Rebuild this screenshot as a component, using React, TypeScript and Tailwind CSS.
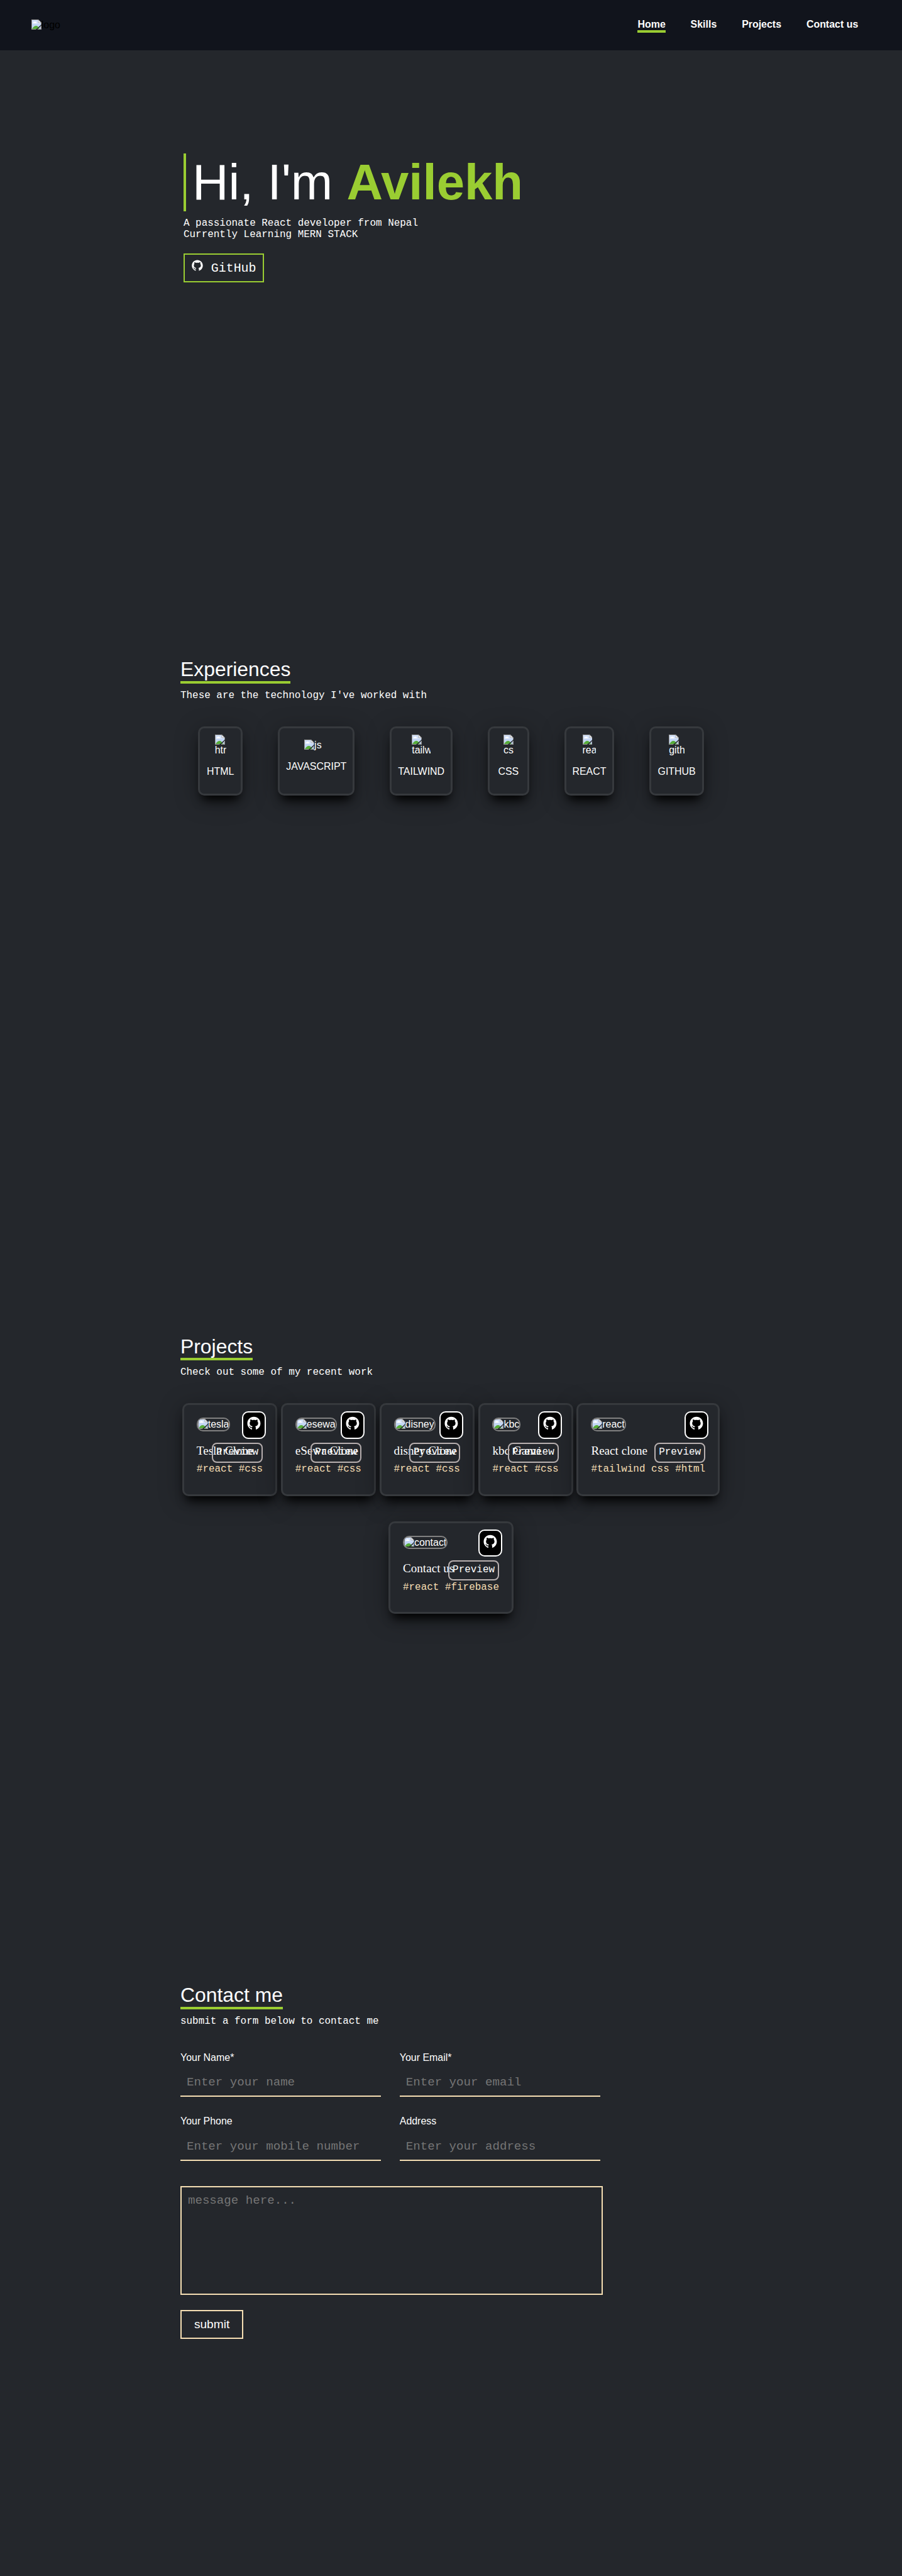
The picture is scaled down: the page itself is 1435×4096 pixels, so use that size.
import React from "react";
import { AiFillGithub } from "react-icons/ai";

const SANS = "font-['Liberation_Sans',sans-serif]";
const MONO = "font-['Liberation_Mono',monospace]";

function BrokenImage() {
  return (
    <svg width="16" height="16" viewBox="0 0 16 16" className="block shrink-0">
      <path d="M0 0H11L16 5V16H0Z" fill="#9a9a9a" />
      <path d="M1 1H11V5H15V15H1Z" fill="#c3d6f5" />
      <path d="M1 1H11V5H15V7H1Z" fill="#d3e1fa" />
      <path d="M11 0.6L15.4 5H11Z" fill="#fff" stroke="#9a9a9a" strokeWidth="0.8" />
      <path d="M2.6 6C2.2 4.6 3.4 4 4.2 4.2C4.6 2.8 6.6 2.8 7 4.2C8.2 4 8.8 5 8.3 6Z" fill="#fff" />
      <path d="M1 15C3 11.5 5 10 7.5 10C9.5 10 11.5 11.5 12.5 15Z" fill="#56ac38" />
      <path d="M16 7.8V9.8L9.6 16H6.9Z" fill="#24272c" />
      <path d="M15 10.8V15H10.8Z" fill="#c3d6f5" />
      <path d="M10 15L12 13.2L13 15Z" fill="#56ac38" />
      <path d="M15 10V16M10 15.5H16" stroke="#9a9a9a" strokeWidth="1" fill="none" />
    </svg>
  );
}

function Heading({ title, text }: { title: string; text: string }) {
  return (
    <div className="flex h-[69px] flex-col items-start">
      <h2 className="h-[41px] border-b-[4.02px] border-[#9acd32] text-[32px] leading-[37px]">{title}</h2>
      <p className={`${MONO} mt-[11px] text-[16px] leading-[18px]`}>{text}</p>
    </div>
  );
}

const skills = [
  { name: "HTML", alt: "html", card: "w-[71.6px]", img: "w-[18px]" },
  { name: "JAVASCRIPT", alt: "js", card: "w-[122.7px]", img: "" },
  { name: "TAILWIND", alt: "tailwind", card: "w-[100px]", img: "w-[30px]" },
  { name: "CSS", alt: "css", card: "w-[66px]", img: "w-[15.5px]" },
  { name: "REACT", alt: "react", card: "w-[80px]", img: "w-[22px]" },
  { name: "GITHUB", alt: "github", card: "w-[87px]", img: "w-[25px]" },
];

const CARD =
  "border-[3.02px] border-[#36393d] rounded-[10px] bg-[#24272c] shadow-[0_14px_16px_-8px_#000,0_8px_36px_rgba(0,0,0,0.35)]";

const projects = [
  { title: "Tesla Clone", alt: "tesla", tags: "#react #css" },
  { title: "eSewa Clone", alt: "esewa", tags: "#react #css" },
  { title: "disney Clone", alt: "disney", tags: "#react #css" },
  { title: "kbc Game", alt: "kbc", tags: "#react #css" },
  { title: "React clone", alt: "react", tags: "#tailwind css #html" },
  { title: "Contact us", alt: "contact", tags: "#react #firebase" },
];

function Project({ title, alt, tags }: { title: string; alt: string; tags: string }) {
  return (
    <div className={`${CARD} relative h-[148px] px-5 pt-5`}>
      <div className="flex h-[22px] w-max overflow-hidden rounded-[10px] border-[2.01px] border-[#808080]">
        <BrokenImage />
        <span className="text-[16px] leading-[18px]">{alt}</span>
      </div>
      <h3 className="mt-5 w-0 whitespace-nowrap font-['Liberation_Serif',serif] text-[19.2px] leading-[22px]">{title}</h3>
      <p className={`${MONO} mt-[10.5px] whitespace-nowrap text-[16px] leading-[18px] text-[#f5deb3]`}>{tags}</p>
      <a className="absolute right-[15px] top-[10px] flex h-[44px] w-[38px] justify-center rounded-[10px] border-[2.01px] border-white bg-black pt-[5px]">
        <AiFillGithub size={24} />
      </a>
      <a className={`${MONO} absolute right-5 top-[60px] h-8 rounded-[8px] border-[2.01px] border-[#b8b0b0] p-[5px] text-[16px] leading-[18px]`}>
        Preview
      </a>
    </div>
  );
}

function Field({ label, hint }: { label: string; hint: string }) {
  return (
    <label className="flex w-[320px] flex-col">
      <span className="text-[16px] leading-[18px]">{label}</span>
      <input
        placeholder={hint}
        className={`${MONO} mt-[10px] h-[44px] w-full border-b-[2.01px] border-[#f5deb3] bg-transparent px-[10px] text-[19.2px] placeholder:text-[#757575]`}
      />
    </label>
  );
}

export default function App() {
  return (
    <div className="h-[4096px] w-full overflow-hidden bg-[#24272c]">
      <div className={`${SANS} w-full text-white [zoom:0.99655]`}>
        <header className="flex h-20 items-start justify-between bg-[#11141c] pl-[50px] pr-[70px] pt-[31px]">
          <div className="flex text-black">
            <BrokenImage />
            <span className="text-[16px] leading-[18px]">logo</span>
          </div>
          <nav className="-mt-px flex gap-10 text-[16px] font-bold leading-[18px]">
            <a className="h-[22px] border-b-[4.02px] border-[#9acd32]">Home</a>
            <a>Skills</a>
            <a>Projects</a>
            <a>Contact us</a>
          </nav>
        </header>

        <section className="mx-auto flex h-[970px] w-[864px] flex-col items-start pl-[5px] pt-[165px]">
          <h1 className="border-l-[4.02px] border-[#9acd32] pl-[10px] text-[80px] leading-[92px]">
            Hi, I'm <b className="text-[#9acd32]">Avilekh</b>
          </h1>
          <p className={`${MONO} mt-[11px] text-[16px] leading-[18px]`}>
            A passionate React developer from Nepal
            <br />
            Currently Learning MERN STACK
          </p>
          <a className={`${MONO} mt-5 flex h-[47px] w-[128px] items-start border-[2.01px] border-[#9acd32] pl-[10px] text-[20px] leading-[23px]`}>
            <AiFillGithub size={20} className="mt-[7px]" />
            <span className="ml-3 mt-[11px]">GitHub</span>
          </a>
        </section>

        <section className="mx-auto h-[1080px] w-[864px]">
          <Heading title="Experiences" text="These are the technology I've worked with" />
          <div className="mt-10 flex justify-around">
            {skills.map((s) => (
              <div key={s.name} className={`${CARD} ${s.card} flex h-[110px] flex-col items-center pt-[10px] text-[16px] leading-[18px]`}>
                {s.img ? (
                  <div className={`${s.img} overflow-hidden`}>
                    <BrokenImage />
                    <span className="block">{s.alt}</span>
                  </div>
                ) : (
                  <div className="mt-2 flex w-[38.5px]">
                    <BrokenImage />
                    <span>{s.alt}</span>
                  </div>
                )}
                <p className="mt-4">{s.name}</p>
              </div>
            ))}
          </div>
        </section>

        <section className="mx-auto h-[1035px] w-[864px]">
          <Heading title="Projects" text="Check out some of my recent work" />
          <div className="mt-10 flex flex-wrap justify-around gap-y-10">
            {projects.map((p) => (
              <Project key={p.title} {...p} />
            ))}
          </div>
        </section>

        <section className="mx-auto h-[945px] w-[864px]">
          <Heading title="Contact me" text="submit a form below to contact me" />
          <form className="mt-10 flex w-[674px] flex-col items-start">
            <div className="grid grid-cols-[320px_320px] gap-x-[30px] gap-y-[30px]">
              <Field label="Your Name*" hint="Enter your name" />
              <Field label="Your Email*" hint="Enter your email" />
              <Field label="Your Phone" hint="Enter your mobile number" />
              <Field label="Address" hint="Enter your address" />
            </div>
            <textarea
              placeholder="message here..."
              className={`${MONO} mt-10 block h-[174px] w-[674px] resize-none border-[2.01px] border-[#f5deb3] bg-transparent px-[10px] pb-[10px] pt-[11px] text-[19.2px] leading-[22px] placeholder:text-[#757575]`}
            />
            <button type="button" className="mt-6 h-[46px] border-[2.01px] border-[#f5deb3] px-5 text-[19.2px] leading-[22px]">
              submit
            </button>
          </form>
        </section>
      </div>
    </div>
  );
}
